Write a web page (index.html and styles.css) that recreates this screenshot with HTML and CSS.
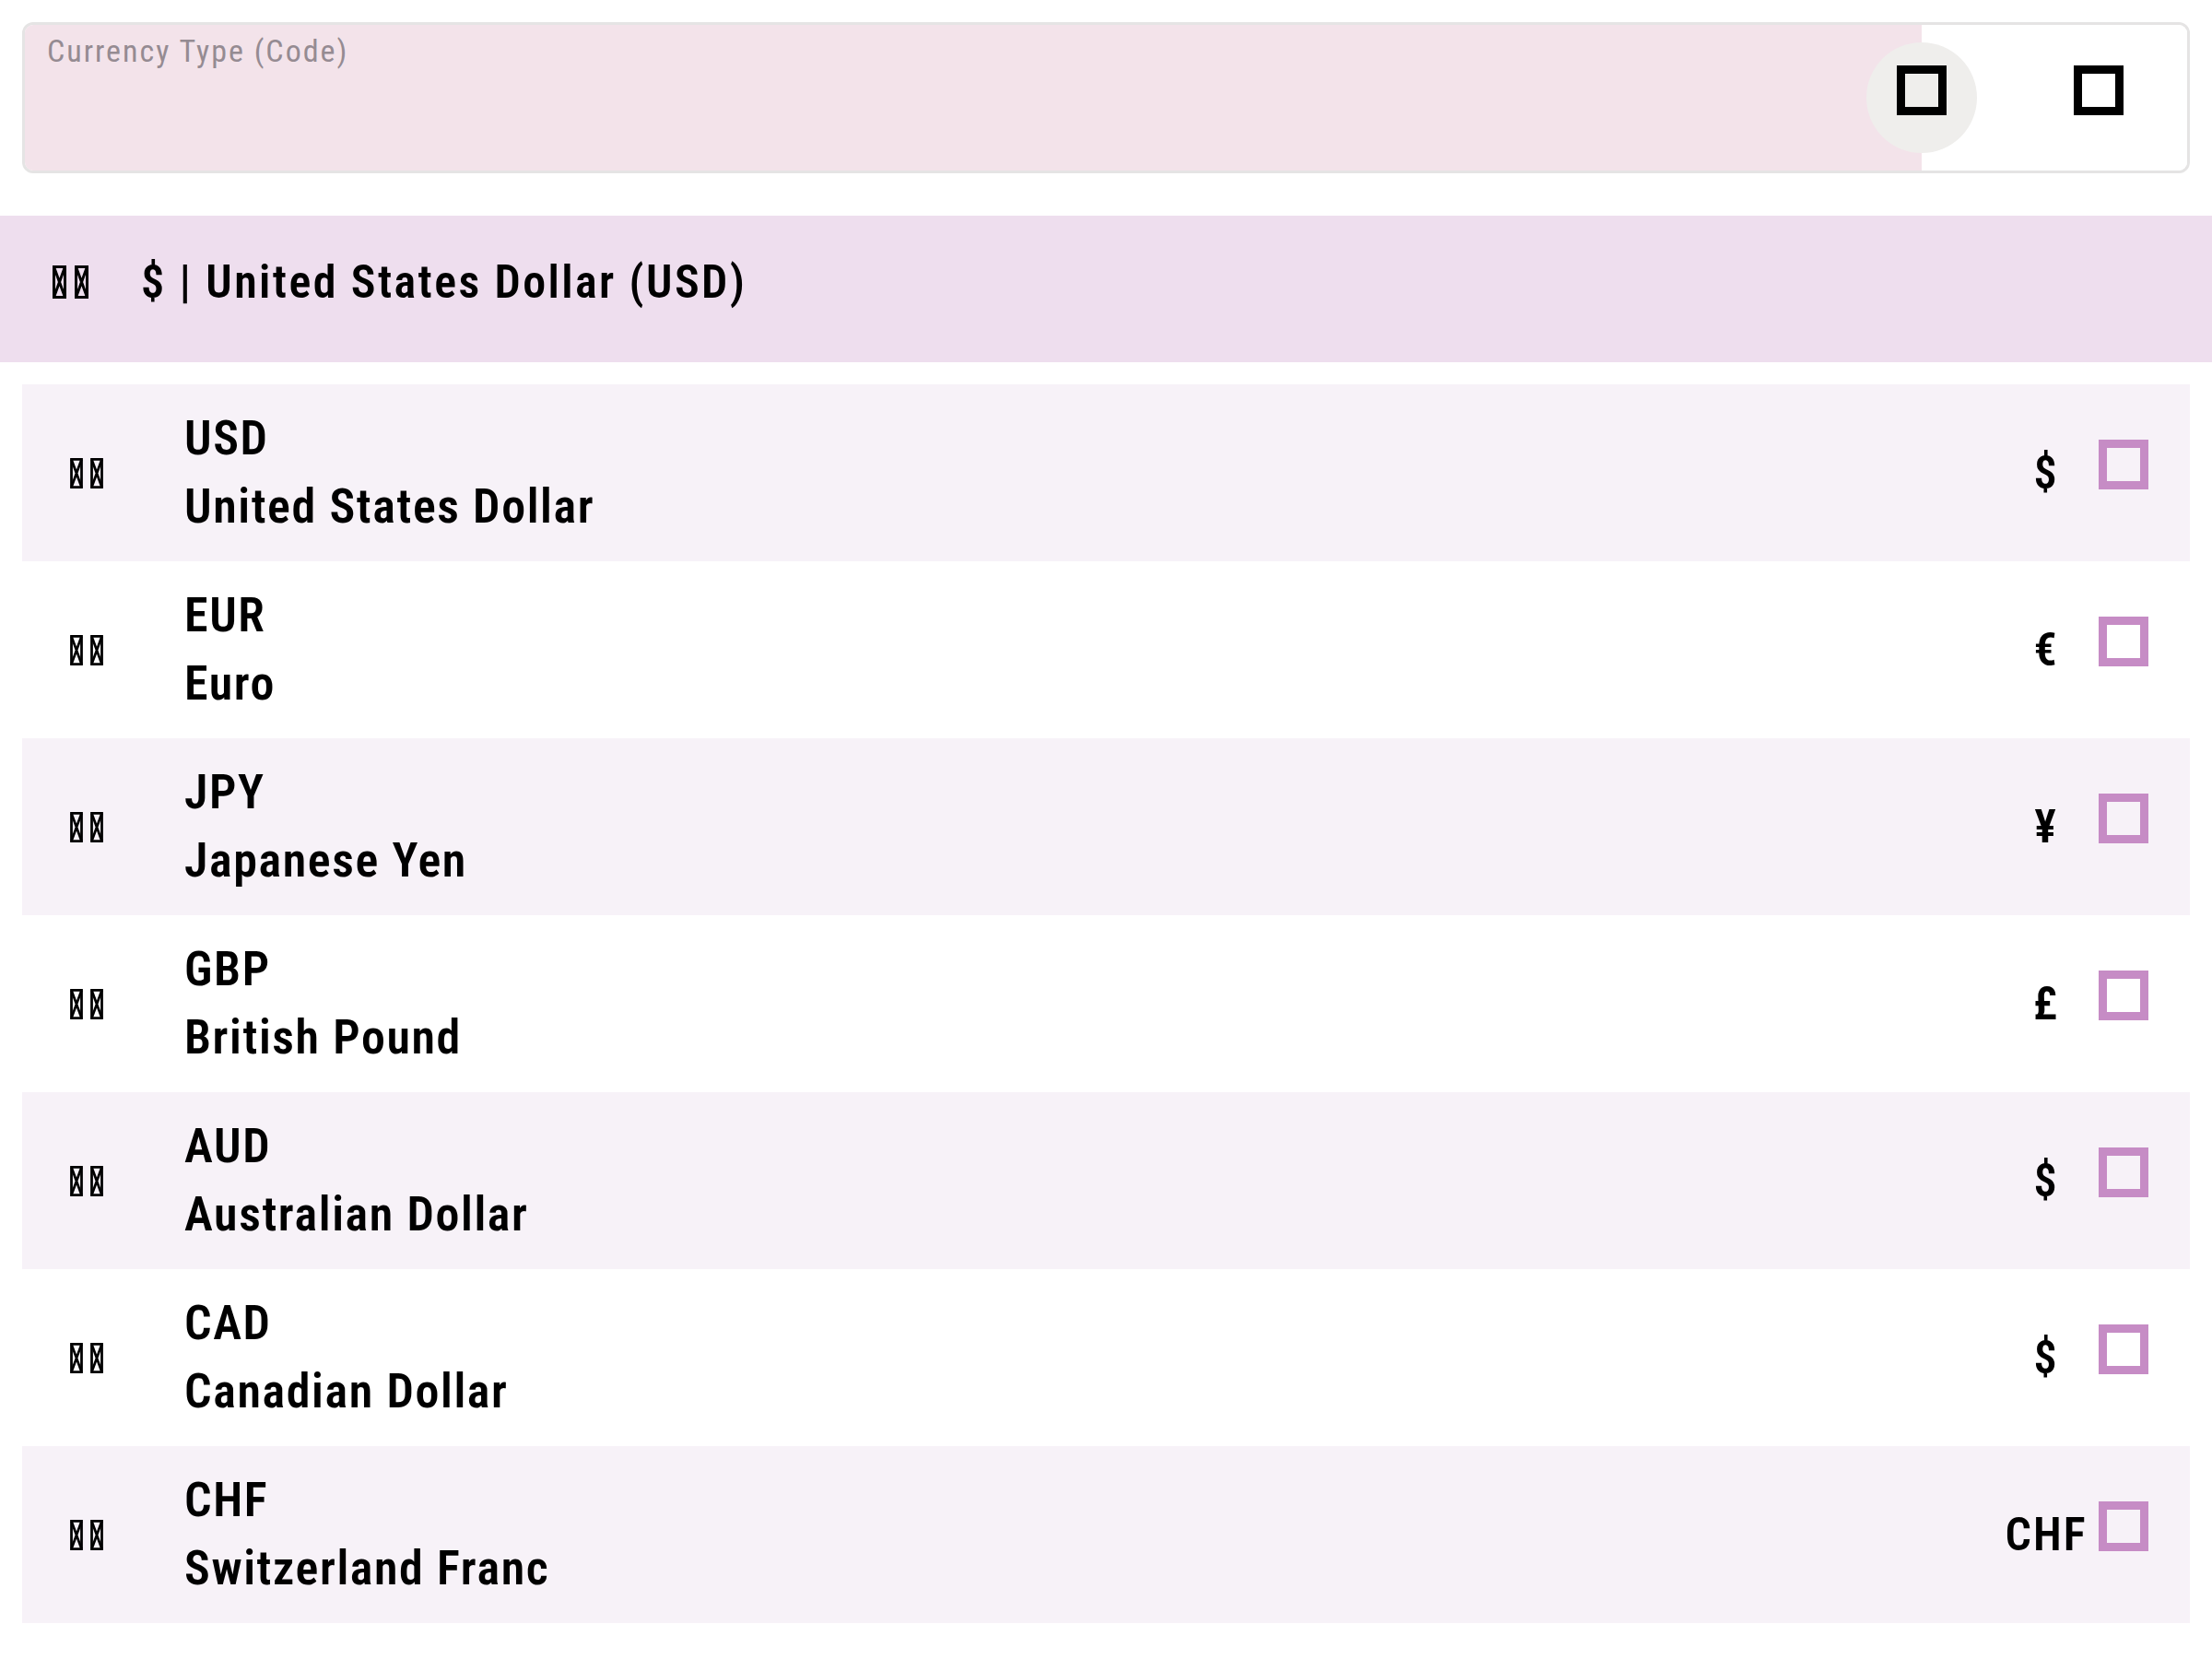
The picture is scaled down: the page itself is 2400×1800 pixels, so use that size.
FILE: index.html
```html
<!DOCTYPE html>
<html lang="en">
<head>
<meta charset="utf-8">
<title>Currency Picker</title>
<link rel="stylesheet" href="styles.css">
</head>
<body>
<div class="field">
  <div class="field-input"><span class="field-label">Currency Type (Code)</span></div>
  <div class="field-end">
    <span class="ripple"></span>
    <span class="icon icon-first"></span>
    <span class="icon"></span>
  </div>
</div>
<div class="selected">
  <svg class="tofu tofu-head" viewBox="0 0 39 36" aria-label="US flag"><g fill="none" stroke="#000" stroke-width="3"><rect x="1.5" y="1.5" width="12" height="33"/><path d="M1.5 1.5 L13.5 34.5 M13.5 1.5 L1.5 34.5"/><rect x="25.5" y="1.5" width="12" height="33"/><path d="M25.5 1.5 L37.5 34.5 M37.5 1.5 L25.5 34.5"/></g></svg>
  <span class="selected-text">$ | United States Dollar (USD)</span>
</div>
<ul class="list">
  <li class="row row-alt">
    <span class="flag"><svg class="tofu" viewBox="0 0 39 36"><use href="#t"/></svg></span>
    <span class="names"><span class="code">USD</span><span class="name">United States Dollar</span></span>
    <span class="symbol">$</span><span class="check"></span>
  </li>
  <li class="row">
    <span class="flag"><svg class="tofu" viewBox="0 0 39 36"><use href="#t"/></svg></span>
    <span class="names"><span class="code">EUR</span><span class="name">Euro</span></span>
    <span class="symbol">€</span><span class="check"></span>
  </li>
  <li class="row row-alt">
    <span class="flag"><svg class="tofu" viewBox="0 0 39 36"><use href="#t"/></svg></span>
    <span class="names"><span class="code">JPY</span><span class="name">Japanese Yen</span></span>
    <span class="symbol">¥</span><span class="check"></span>
  </li>
  <li class="row">
    <span class="flag"><svg class="tofu" viewBox="0 0 39 36"><use href="#t"/></svg></span>
    <span class="names"><span class="code">GBP</span><span class="name">British Pound</span></span>
    <span class="symbol">£</span><span class="check"></span>
  </li>
  <li class="row row-alt">
    <span class="flag"><svg class="tofu" viewBox="0 0 39 36"><use href="#t"/></svg></span>
    <span class="names"><span class="code">AUD</span><span class="name">Australian Dollar</span></span>
    <span class="symbol">$</span><span class="check"></span>
  </li>
  <li class="row">
    <span class="flag"><svg class="tofu" viewBox="0 0 39 36"><use href="#t"/></svg></span>
    <span class="names"><span class="code">CAD</span><span class="name">Canadian Dollar</span></span>
    <span class="symbol">$</span><span class="check"></span>
  </li>
  <li class="row row-alt">
    <span class="flag"><svg class="tofu" viewBox="0 0 39 36"><use href="#t"/></svg></span>
    <span class="names"><span class="code">CHF</span><span class="name">Switzerland Franc</span></span>
    <span class="symbol">CHF</span><span class="check"></span>
  </li>
</ul>
<svg class="defs" width="0" height="0"><defs><g id="t" fill="none" stroke="#000" stroke-width="3"><rect x="1.5" y="1.5" width="12" height="33"/><path d="M1.5 1.5 L13.5 34.5 M13.5 1.5 L1.5 34.5"/><rect x="25.5" y="1.5" width="12" height="33"/><path d="M25.5 1.5 L37.5 34.5 M37.5 1.5 L25.5 34.5"/></g></defs></svg>
</body>
</html>
```

FILE: styles.css
```css
* { box-sizing: border-box; }
html, body { margin: 0; padding: 0; background: #ffffff; }
body {
  font-family: Roboto, "Noto Sans", "DejaVu Sans", sans-serif;
  font-stretch: 75%;
  color: #000000;
}
.defs { position: absolute; width: 0; height: 0; }

.field {
  margin: 24px 24px 0 24px;
  height: 164px;
  border: 3px solid #e5e4e4;
  border-radius: 12px;
  display: flex;
  overflow: hidden;
  background: #ffffff;
}
.field-input {
  flex: 1;
  background: #f3e3ea;
  padding: 8px 0 0 24px;
}
.field-label {
  font-size: 34px;
  line-height: normal;
  letter-spacing: 2px;
  color: #958b92;
}
.field-end {
  position: relative;
  z-index: 0;
  width: 288px;
  display: flex;
  align-items: flex-start;
  gap: 138px;
  padding-top: 44px;
  background: #ffffff;
}
.ripple {
  position: absolute;
  z-index: -1;
  left: -60px;
  top: 19px;
  width: 120px;
  height: 120px;
  border-radius: 50%;
  background: #efeeec;
}
.icon {
  width: 54px;
  height: 54px;
  border: 9px solid #000000;
}
.icon-first { margin-left: -27px; }

.selected {
  margin-top: 46px;
  height: 159px;
  background: #eedeee;
  display: flex;
  align-items: center;
  padding: 0 0 15px 57px;
}
.tofu {
  display: block;
  width: 39px;
  height: 36px;
}
.tofu-head { margin-right: 57px; }
.selected-text {
  font-size: 50px;
  font-weight: 600;
  letter-spacing: 2.4px;
}

.list {
  list-style: none;
  margin: 24px 24px 0 24px;
  padding: 0;
}
.row {
  height: 192px;
  display: flex;
  align-items: center;
  padding: 0 45px 0 51px;
  background: #ffffff;
}
.row-alt { background: #f7f2f8; }
.flag { width: 125px; display: flex; }
.flag .tofu { width: 38px; height: 33px; }
.names {
  flex: 1;
  display: flex;
  flex-direction: column;
  font-size: 52px;
  font-weight: 600;
  letter-spacing: 1.6px;
  line-height: 74px;
}
.symbol {
  width: 90px;
  display: flex;
  justify-content: center;
  font-size: 50px;
  font-weight: 600;
  letter-spacing: 2px;
  margin-right: 12px;
}
.check {
  width: 54px;
  height: 54px;
  border: 9px solid #c68cc5;
  margin-bottom: 18px;
}
```
